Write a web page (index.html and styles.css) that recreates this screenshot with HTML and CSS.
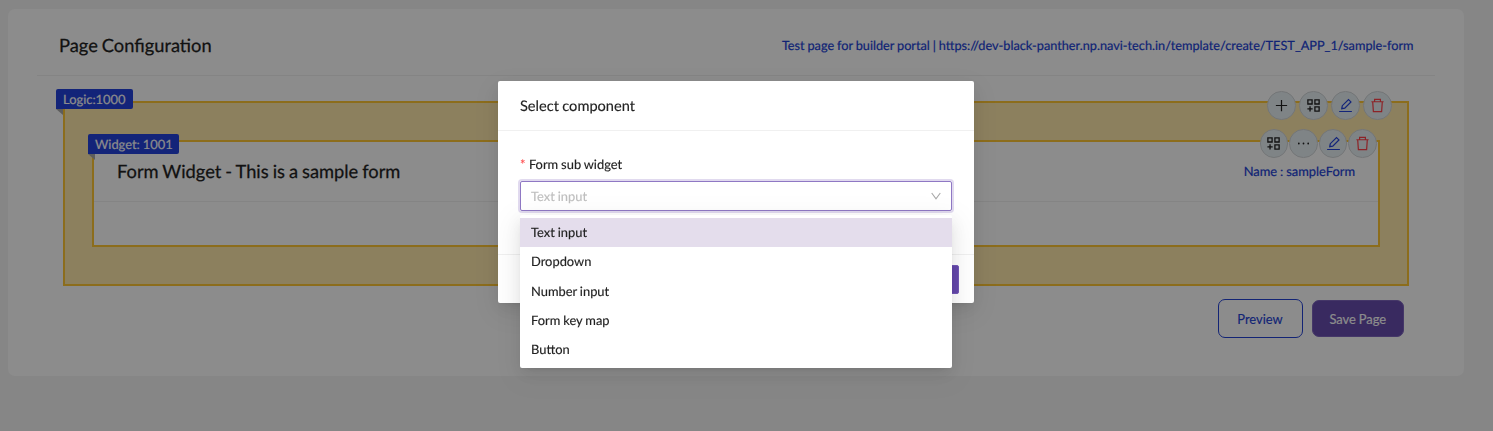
FILE: index.html
```
<!DOCTYPE html>
<html lang="en">
<head>
<meta charset="utf-8">
<title>Page Configuration</title>
<link rel="stylesheet" href="styles.css">
</head>
<body>
<svg class="defs" aria-hidden="true">
  <symbol id="plus" viewBox="0 0 16 16"><path d="M8 2v12M2 8h12"/></symbol>
  <symbol id="blocks" viewBox="0 0 16 16"><path d="M2 1.9h4.5v4.5H2zM9.5 1.9H14v4.5H9.5zM9.5 9.5H14V14H9.5zM4.3 8.8v5.6M1.5 11.6H7.1"/></symbol>
  <symbol id="edit" viewBox="0 0 16 16"><path d="M1.2 14.4h13.6M4 11.4l.6-3.2 6.6-6.6 2.6 2.6-6.6 6.6z"/></symbol>
  <symbol id="trash" viewBox="0 0 16 16"><path d="M1.5 4h13M4.9 3.8V1.5h6.2v2.3M2.9 4.2l.7 10.3h8.8l.7-10.3"/></symbol>
  <symbol id="dots" viewBox="0 0 16 16"><circle cx="3" cy="8" r=".95"/><circle cx="8" cy="8" r=".95"/><circle cx="13" cy="8" r=".95"/></symbol>
</svg>
<main class="card">
  <header class="card-head">
    <h1 class="title">Page Configuration</h1>
    <a class="link page-link">Test page for builder portal | https://dev-black-panther.np.navi-tech.in/template/create/TEST_APP_1/sample-form</a>
  </header>
  <section class="logic">
    <span class="ribbon logic-ribbon">Logic:1000</span>
    <div class="tools logic-tools">
      <button class="tool"><svg><use href="#plus"/></svg></button>
      <button class="tool"><svg class="bold"><use href="#blocks"/></svg></button>
      <button class="tool blue"><svg><use href="#edit"/></svg></button>
      <button class="tool red"><svg><use href="#trash"/></svg></button>
    </div>
    <section class="widget">
      <span class="ribbon widget-ribbon">Widget: 1001</span>
      <div class="tools widget-tools">
        <button class="tool"><svg class="bold"><use href="#blocks"/></svg></button>
        <button class="tool"><svg class="solid"><use href="#dots"/></svg></button>
        <button class="tool blue"><svg><use href="#edit"/></svg></button>
        <button class="tool red"><svg><use href="#trash"/></svg></button>
      </div>
      <header class="widget-head">
        <h2 class="title">Form Widget - This is a sample form</h2>
        <a class="link name-link">Name : sampleForm</a>
      </header>
    </section>
  </section>
  <footer class="actions">
    <button class="btn preview">Preview</button>
    <button class="btn save">Save Page</button>
  </footer>
</main>
<div class="mask">
  <div class="modal">
    <header class="modal-head">Select component</header>
    <div class="modal-body">
      <label class="label"><span class="star">*</span>Form sub widget</label>
      <div class="select">
        <span>Text input</span>
        <svg class="chevron" viewBox="0 0 10 8"><path d="M.7 1 5 6.8 9.3 1"/></svg>
        <ul class="menu">
          <li class="option active">Text input</li>
          <li class="option">Dropdown</li>
          <li class="option">Number input</li>
          <li class="option">Form key map</li>
          <li class="option">Button</li>
        </ul>
      </div>
    </div>
    <footer class="modal-foot"><button class="ok" aria-label="OK"></button></footer>
  </div>
</div>
</body>
</html>
```
FILE: styles.css
```
* { box-sizing: border-box; }
body {
  margin: 0;
  height: 431px;
  overflow: hidden;
  padding: 9px 29px 0 8px;
  background: #f5f5f5;
  color: #222;
  font: 12.9px/20px Lato, sans-serif;
  word-spacing: -.4px;
  text-rendering: geometricPrecision;
  -webkit-text-stroke: .15px currentColor;
}
button { font: inherit; padding: 0; word-spacing: inherit; }
.defs { display: none; }
.card {
  height: 367px;
  padding: 0 29px;
  background: #fff;
  border-radius: 7px;
}
.card-head {
  display: flex;
  justify-content: space-between;
  align-items: center;
  height: 67px;
  padding: 6px 21.5px 0 22px;
  border-bottom: 1px solid #f0f0f0;
}
.title { margin: 0; font-size: 18.3px; line-height: 26px; font-weight: 400; word-spacing: -.7px; -webkit-text-stroke-width: .25px; }
.link { color: #203fd6; font-size: 12.72px; -webkit-text-stroke-width: .2px; }
.name-link { font-size: 12.9px; }
.logic {
  position: relative;
  height: 185px;
  margin: 25px 26px 0;
  padding: 37px 27px;
  background: #ffe9ac;
  border: 2px solid #ffc633;
}
.widget {
  position: relative;
  height: 107px;
  background: #fff;
  border: 2px solid #ffc633;
}
.widget-head {
  display: flex;
  justify-content: space-between;
  align-items: center;
  height: 60px;
  padding: 0 23px 1px;
  border-bottom: 1px solid #f0f0f0;
}
.ribbon {
  position: absolute;
  height: 20px;
  padding: 0 7px;
  background: #2443dc;
  color: #fff;
  border-radius: 2px 2px 2px 0;
  white-space: nowrap;
  line-height: 21px;
}
.ribbon::after {
  content: "";
  position: absolute;
  left: 0;
  top: 20px;
  border-top: 6px solid #aaa;
  border-left: 7px solid transparent;
}
.logic-ribbon { left: -9px; top: -14px; width: 77px; }
.widget-ribbon { left: -6px; top: -8.5px; width: 91px; }
.tools { position: absolute; display: flex; }
.logic-tools { right: 15px; top: -12px; gap: 3.4px; }
.widget-tools { right: 1px; top: -13px; gap: 1px; }
.tool {
  display: grid;
  place-items: center;
  width: 28.6px;
  height: 28.6px;
  border: 1px solid #d2d6d8;
  border-radius: 50%;
  background: #e8f1f5;
  color: #222;
}
.tool svg { width: 15px; height: 15px; fill: none; stroke: currentColor; stroke-width: 1.3; }
.tool svg.bold { stroke-width: 1.4; }
.tool svg.solid { fill: currentColor; stroke: none; }
.tool.blue { color: #2443dc; }
.tool.red { color: #ff4148; }
.actions {
  display: flex;
  justify-content: flex-end;
  align-items: center;
  gap: 9px;
  padding: 13px 31px 0;
}
.btn { border-radius: 7px; }
.preview { width: 85px; height: 39px; background: #fff; border: 1px solid #2443d6; color: #2443d6; }
.save { width: 92.5px; height: 37px; background: #684db0; border: 1px solid #7e65bd; color: #fff; }
.mask {
  position: fixed;
  inset: 0;
  padding: 81px 0 0 498px;
  background: rgba(0, 0, 0, .45);
}
.modal {
  width: 476px;
  height: 222px;
  background: #fff;
  border-radius: 2px;
  box-shadow: 0 3px 6px -4px rgba(0,0,0,.12), 0 6px 16px rgba(0,0,0,.08), 0 9px 28px 8px rgba(0,0,0,.05);
}
.modal-head {
  height: 50px;
  padding: 15px 22px 13px;
  border-bottom: 1px solid #f0f0f0;
  font-size: 14.6px;
  line-height: 22px;
}
.modal-body { height: 123px; padding: 23px 22px 0; }
.label { display: block; height: 27px; }
.star { margin-right: 3.4px; color: #ff4d4f; }
.select {
  position: relative;
  display: flex;
  justify-content: space-between;
  align-items: center;
  height: 30px;
  padding: 0 10px;
  border: 1px solid #8f78c4;
  border-radius: 2px;
  box-shadow: 0 0 0 2px rgba(103, 72, 176, .2);
  color: #bfbfbf;
}
.chevron { width: 10px; height: 8px; fill: none; stroke: #a8a8a8; stroke-width: 1.1; }
.menu {
  position: absolute;
  left: -1px;
  right: -1px;
  top: 33px;
  margin: 0;
  padding: 3.2px 0 3.3px;
  background: #fff;
  border-radius: 2px;
  list-style: none;
  color: #222;
  box-shadow: 0 3px 6px -4px rgba(0,0,0,.12), 0 6px 16px rgba(0,0,0,.08), 0 9px 28px 8px rgba(0,0,0,.05);
}
.option { height: 29.3px; padding: 0 11px; line-height: 29.3px; }
.option.active { background: #e4ddec; }
.modal-foot {
  display: flex;
  justify-content: flex-end;
  height: 49px;
  padding: 10px 15px;
  border-top: 1px solid #f0f0f0;
}
.ok { width: 59px; height: 29px; border: 1px solid #7459b8; border-radius: 2px; background: #6548ac; }
```
